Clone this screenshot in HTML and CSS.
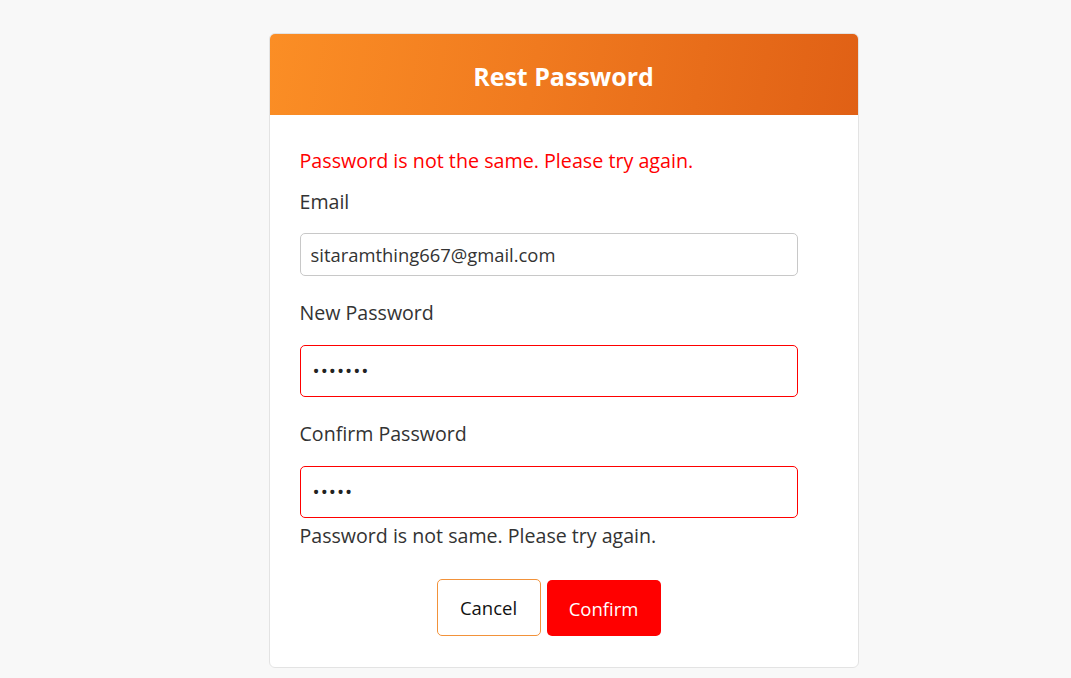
FILE: index.html
```html
<!DOCTYPE html>
<html>
<head>
<meta charset="utf-8">
<link rel="stylesheet" href="styles.css">
</head>
<body>
<div class="page">
  <div class="card">
    <div class="card-header"><h1>Rest Password</h1></div>
    <div class="card-body">
      <p class="error">Password is not the same. Please try again.</p>
      <form class="form">
        <label class="label">Email</label>
        <input class="input input-email" type="text" value="sitaramthing667@gmail.com">
        <label class="label">New Password</label>
        <input class="input input-pass" type="password" value="1234567">
        <label class="label">Confirm Password</label>
        <input class="input input-pass" type="password" value="12345">
        <p class="help">Password is not same. Please try again.</p>
        <div class="actions">
          <button type="button" class="btn btn-cancel">Cancel</button>
          <button type="button" class="btn btn-confirm">Confirm</button>
        </div>
      </form>
    </div>
  </div>
</div>
</body>
</html>
```
FILE: styles.css
```css
* { box-sizing: border-box; }
html, body { margin: 0; padding: 0; }
body {
  background: #f8f8f8;
  font-family: "Open Sans", "Noto Sans", sans-serif;
  color: #333;
}
.page {
  display: flex;
  justify-content: center;
  padding-top: 33px;
  padding-left: 56px;
}
.card {
  width: 590px;
  background: #fff;
  border: 1px solid #e3e3e3;
  border-radius: 6px;
  overflow: hidden;
}
.card-header {
  height: 82px;
  margin: -1px -1px 0 -1px;
  background: linear-gradient(100deg, #fb8e25 0%, #f07a1f 45%, #e06015 100%);
  display: flex;
  align-items: center;
  justify-content: center;
}
.card-header h1 {
  margin: 0;
  color: #fff;
  font-size: 25px;
  font-weight: 700;
  padding-top: 3px;
}
.card-body {
  padding: 31px 30px 31px 30px;
}
.error {
  margin: 0;
  color: #ff0000;
  font-size: 19.7px;
  line-height: 30px;
}
.form {
  width: 498px;
  display: flex;
  flex-direction: column;
}
.label {
  display: block;
  font-size: 19.6px;
  line-height: 30px;
  color: #333;
  margin-top: 11px;
  margin-bottom: 16px;
}
.input + .label { margin-top: 22px; margin-bottom: 17px; }
.input {
  width: 498px;
  font-family: inherit;
  font-size: 18.4px;
  color: #333;
  background: #fff;
  border-radius: 5px;
  padding: 0 10px;
  outline: none;
}
.input-email {
  height: 43px;
  border: 1px solid #c8c8c8;
}
.input-pass {
  height: 52px;
  border: 1px solid #ff0000;
  padding-left: 12px;
  font-size: 19px;
  letter-spacing: 1px;
  color: #222;
}
.help {
  margin: 3px 0 0 0;
  font-size: 19.6px;
  line-height: 30px;
  color: #333;
}
.actions {
  display: flex;
  justify-content: center;
  gap: 6px;
  margin-top: 28px;
}
.btn {
  font-family: inherit;
  font-size: 18.5px;
  border-radius: 5px;
  cursor: pointer;
}
.btn-cancel {
  width: 104px;
  height: 57px;
  background: #fff;
  color: #111;
  border: 1px solid #f2923a;
}
.btn-confirm {
  width: 114px;
  height: 56px;
  margin-top: 1px;
  background: #ff0000;
  color: #fff;
  border: none;
}
```
